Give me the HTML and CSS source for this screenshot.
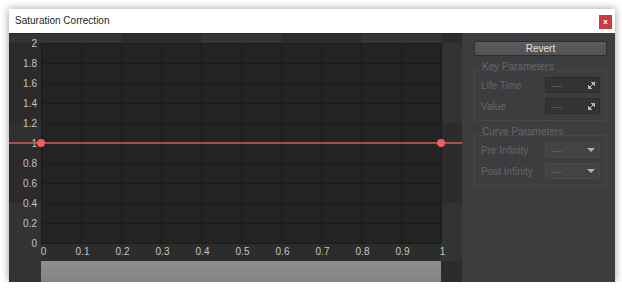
FILE: index.html
```html
<!DOCTYPE html>
<html lang="en">
<head>
  <meta charset="UTF-8" />
  <title>Saturation Correction</title>
  <link rel="stylesheet" href="styles.css">
</head>
<body>
  <div class="window">
    <div class="titlebar">
      <span class="title">Saturation Correction</span>
      <div class="close-btn">x</div>
    </div>

    <div class="content">
      <!-- Curve editor -->
      <svg class="graph" width="453" height="249" viewBox="0 0 453 249">
        <!-- left axis column -->
        <rect x="0" y="0" width="32" height="10" fill="#343434"/>
        <rect x="0" y="10" width="32" height="80" fill="#2b2b2b"/>
        <rect x="0" y="90" width="32" height="20" fill="#303030"/>
        <rect x="0" y="110" width="32" height="60" fill="#2b2b2b"/>
        <rect x="0" y="170" width="32" height="79" fill="#333333"/>
        <!-- right column -->
        <rect x="432" y="0" width="21" height="10" fill="#2b2b2b"/>
        <rect x="432" y="10" width="21" height="80" fill="#333333"/>
        <rect x="432" y="90" width="21" height="80" fill="#2c2c2c"/>
        <rect x="432" y="170" width="21" height="58" fill="#333333"/>
        <rect x="432" y="228" width="21" height="21" fill="#2c2c2c"/>
        <!-- top strip -->
        <rect x="32" y="0" width="80" height="10" fill="#353535"/>
        <rect x="112" y="0" width="80" height="10" fill="#2c2c2c"/>
        <rect x="192" y="0" width="80" height="10" fill="#353535"/>
        <rect x="272" y="0" width="80" height="10" fill="#2c2c2c"/>
        <rect x="352" y="0" width="80" height="10" fill="#353535"/>
        <line x1="0" y1="0.5" x2="453" y2="0.5" stroke="#262626"/>
        <!-- x label row -->
        <rect x="32" y="210" width="400" height="18" fill="#2c2c2c"/>
        <!-- bottom strip -->
        <defs>
          <linearGradient id="strip" x1="0" y1="0" x2="0" y2="1">
            <stop offset="0" stop-color="#8e8e8e"/>
            <stop offset="1" stop-color="#848484"/>
          </linearGradient>
        </defs>
        <rect x="32" y="228" width="400" height="21" fill="url(#strip)"/>
        <!-- plot -->
        <rect x="32" y="10" width="400" height="200" fill="#232323"/>
        <g id="grid" stroke="#1b1b1b" stroke-width="1"></g>
        <g id="labels"></g>
        <!-- curve -->
        <line x1="0" y1="110" x2="453" y2="110" stroke="#d85a5d" stroke-width="1.6"/>
        <circle cx="32" cy="110" r="4" fill="#f25b5f"/>
        <circle cx="432" cy="110" r="4" fill="#f25b5f"/>
      </svg>

      <!-- Side panel -->
      <div class="panel">
        <div class="revert-btn">Revert</div>

        <div class="group-title">Key Parameters</div>
        <div class="group">
          <div class="row">
            <span class="row-label">Life Time</span>
            <div class="field">
              <span class="dash">—</span>
              <svg class="expand" width="7" height="7" viewBox="0 0 7 7">
                <path d="M3 0H7V4Z M0 3V7H4Z M1.5 5.5L5.5 1.5" fill="#b5b5b5" stroke="#b5b5b5" stroke-width="1"/>
              </svg>
            </div>
          </div>
          <div class="row">
            <span class="row-label">Value</span>
            <div class="field">
              <span class="dash">—</span>
              <svg class="expand" width="7" height="7" viewBox="0 0 7 7">
                <path d="M3 0H7V4Z M0 3V7H4Z M1.5 5.5L5.5 1.5" fill="#b5b5b5" stroke="#b5b5b5" stroke-width="1"/>
              </svg>
            </div>
          </div>
        </div>

        <div class="group-title">Curve Parameters</div>
        <div class="group">
          <div class="row">
            <span class="row-label">Pre Infinity</span>
            <div class="combo">
              <span class="dash">—</span>
              <span class="arrow"></span>
            </div>
          </div>
          <div class="row">
            <span class="row-label">Post Infinity</span>
            <div class="combo">
              <span class="dash">—</span>
              <span class="arrow"></span>
            </div>
          </div>
        </div>
      </div>
    </div>
  </div>

  <script>
    const NS = "http://www.w3.org/2000/svg";
    const grid = document.getElementById("grid");
    const labels = document.getElementById("labels");

    function add(parent, tag, attrs, text) {
      const el = document.createElementNS(NS, tag);
      for (const k in attrs) el.setAttribute(k, attrs[k]);
      if (text !== undefined) el.textContent = text;
      parent.appendChild(el);
    }

    // grid lines and axis labels
    for (let i = 0; i <= 10; i++) {
      const x = 32 + i * 40 + 0.5;
      add(grid, "line", { x1: x, y1: 10, x2: x, y2: 210 });
      const lx = i === 0 ? 34.5 : x + 1;
      add(labels, "text", { x: lx, y: 222, class: "x-label" }, i === 10 ? "1" : i === 0 ? "0" : (i / 10).toFixed(1));
    }
    for (let i = 0; i <= 10; i++) {
      const y = 10 + i * 20 + 0.5;
      add(grid, "line", { x1: 32, y1: y, x2: 432, y2: y });
      const v = 2 - i * 0.2;
      const txt = Math.abs(v - Math.round(v)) < 0.001 ? String(Math.round(v)) : v.toFixed(1);
      add(labels, "text", { x: 28, y: y + 3.5, class: "y-label" }, txt);
    }
  </script>
</body>
</html>
```

FILE: styles.css
```css
* {
  box-sizing: border-box;
}

body {
  margin: 0;
  background: #ffffff;
  font-family: "Liberation Sans", Arial, sans-serif;
}

.window {
  margin: 9px 0 0 9px;
  width: 606px;
  height: 273px;
  display: flex;
  flex-direction: column;
  box-shadow: 0 0 8px rgba(0, 0, 0, 0.4);
}

.titlebar {
  height: 24px;
  background: #ffffff;
  display: flex;
  align-items: flex-start;
  justify-content: space-between;
}

.title {
  margin: 6px 0 0 6px;
  font-size: 10px;
  line-height: 12px;
  color: #1e1e1e;
}

.close-btn {
  margin: 6px 3px 0 0;
  width: 13px;
  height: 14px;
  background: #cc3a41;
  color: #ffffff;
  font: bold 8px "Liberation Sans", Arial, sans-serif;
  line-height: 13px;
  text-align: center;
}

.content {
  flex: 1;
  display: flex;
  background: #2b2b2b;
}

.graph {
  display: block;
  flex: none;
}

.x-label,
.y-label {
  font: 10px "Liberation Sans", Arial, sans-serif;
  fill: #c4c4c4;
}

.x-label {
  text-anchor: middle;
}

.y-label {
  text-anchor: end;
}

.panel {
  flex: 1;
  background: #3d3d40;
  padding: 8px 8px 0 12px;
  display: flex;
  flex-direction: column;
}

.revert-btn {
  height: 15px;
  border: 1px solid #2e2e30;
  border-radius: 2px;
  background: linear-gradient(#5c5c5f, #535356);
  color: #e2e2e2;
  font-size: 10px;
  line-height: 13px;
  text-align: center;
}

.group-title {
  height: 12px;
  margin-top: 5px;
  padding-left: 8px;
  font-size: 10px;
  line-height: 12px;
  color: #68686a;
}

.group {
  margin-top: -3px;
  height: 51px;
  border: 1px solid #47474a;
  border-radius: 2px;
  padding: 6px 6px 0 6px;
  display: flex;
  flex-direction: column;
  gap: 5px;
}

.group + .group-title {
  margin-top: 5px;
}

.row {
  display: flex;
  align-items: center;
  justify-content: space-between;
  height: 16px;
}

.row-label {
  font-size: 10px;
  color: #656567;
}

.field,
.combo {
  width: 55px;
  height: 16px;
  display: flex;
  align-items: center;
  justify-content: space-between;
  padding: 0 4px 0 5px;
  border-radius: 2px;
}

.field {
  background: #333336;
  border: 1px solid #2b2b2d;
}

.combo {
  background: #434346;
  border: 1px solid #49494c;
}

.dash {
  font-size: 11px;
  color: #5e5e60;
}

.expand {
  display: block;
}

.arrow {
  width: 0;
  height: 0;
  border-left: 4px solid transparent;
  border-right: 4px solid transparent;
  border-top: 4px solid #b0b0b0;
}
```
